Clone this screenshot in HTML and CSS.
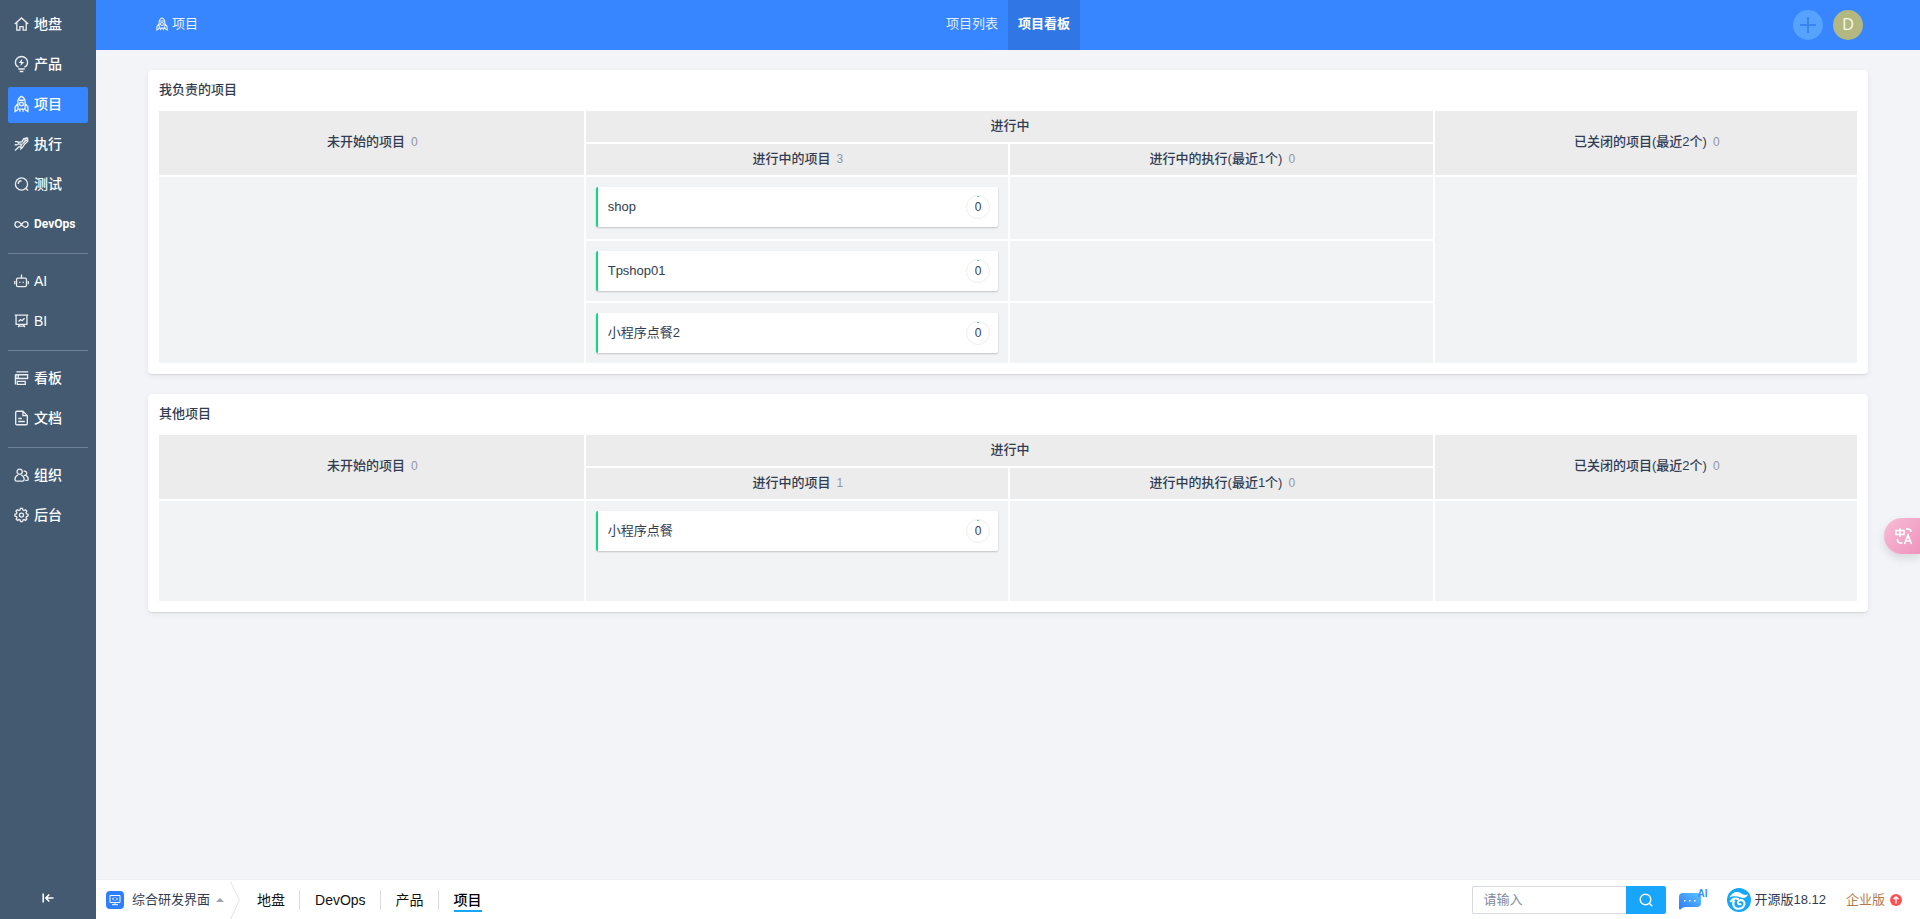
FILE: index.html
```html
<!DOCTYPE html>
<html lang="zh-CN">
<head>
<meta charset="utf-8">
<meta name="viewport" content="width=device-width, initial-scale=1">
<title>项目看板</title>
<link rel="stylesheet" href="styles.css">
</head>
<body>
<svg class="sprite" aria-hidden="true">
  <symbol id="i-rocket" viewBox="0 0 16 18"><path d="M4.200 14.500V6.200C4.200 3.800 6 1.800 8 .8c2 1 3.800 3 3.800 5.400v8.300zM4.200 8.500 1.200 12.200v4.800l3-2M11.800 8.500l3 3.700v4.800l-3-2M6.300 14.500v2.700M9.700 14.500v2.700M5.300 5h5.400"/><circle cx="8" cy="9" r="2"/></symbol>
</svg>
<div class="app">
  <aside class="sidebar">
    <nav class="menu">
      <a class="menu-item" href="#"><svg viewBox="0 0 16 16"><path d="M.8 8 8 1.500 15.200 8M3 6.500v8h3.300v-3.800h3.400v3.800H13v-8"/></svg>地盘</a>
      <a class="menu-item" href="#"><svg class="tall" viewBox="0 0 16 18"><path d="M5 12.500C2.700 11.300 1.500 9.500 1.500 7.300 1.500 3.700 4.400 1 8 1s6.500 2.700 6.500 6.300c0 2.200-1.200 4-3.500 5.200M4.500 14.300h7M6 17h4"/><path class="solid" d="M8.700 3.500 5 8h2.500l-.7 3.200L11 6.800H8.300z"/></svg>产品</a>
      <a class="menu-item active" href="#"><svg class="tall"><use href="#i-rocket"/></svg>项目</a>
      <a class="menu-item" href="#"><svg viewBox="0 0 16 16"><path d="M10.500 2.200 14.500 1.500l.2 3.500-3.200 3-2.700 4-2-.7 1.700-3.200L4.800 8 4.500 6.500l4-1zM1 5.500h3.500M.8 8.800h3M1 15l5-4.500M6.500 14l2-2M9.500 7.500l3.500-4"/><circle cx="12.800" cy="3" r="1.300"/></svg>执行</a>
      <a class="menu-item" href="#"><svg viewBox="0 0 16 16"><circle cx="8" cy="8" r="6.500"/><path d="m12.600 12.600 2.400 2.400M4.500 8A3.500 3.500 0 0 1 8 4.500"/></svg>测试</a>
      <a class="menu-item" href="#"><svg viewBox="0 0 16 16"><path d="M8 8.500C6.600 6.500 5.500 5.500 4 5.500a3 3 0 0 0 0 6c1.500 0 2.600-1 4-3s2.500-3 4-3a3 3 0 0 1 0 6c-1.500 0-2.600-1-4-3z"/></svg><span class="narrow">DevOps</span></a>
    </nav>
    <nav class="menu">
      <a class="menu-item" href="#"><svg viewBox="0 0 16 16"><rect x="2.700" y="5" width="10.600" height="9" rx="1.500"/><path d="M8 5V1.500M.8 8v3.500M15.200 8v3.500M5.500 9.500h1.300M9.200 9.500h1.300"/><circle class="solid" cx="8" cy="1.500" r=".6"/></svg>AI</a>
      <a class="menu-item" href="#"><svg viewBox="0 0 16 16"><path d="M.8 1.800h14.400M2.200 2v9.500h11.600V2M4.500 14.500l1.500-3M11.500 14.500l-1.500-3M5 13.500h6M4.800 8.500 7 6.500l1.700 1.200 2.600-2.700"/></svg>BI</a>
    </nav>
    <nav class="menu">
      <a class="menu-item" href="#"><svg viewBox="0 0 16 16"><path d="M2.500 1.500h12.700M2 4.500h12.500v4H2zM1.500 4.500V15M3.500 11.500H12v3.200H3.500zM4.500 5v3"/></svg>看板</a>
      <a class="menu-item" href="#"><svg viewBox="0 0 16 16"><path d="M9.500.8H3A1.200 1.200 0 0 0 1.800 2v12A1.200 1.200 0 0 0 3 15.200h10a1.200 1.200 0 0 0 1.200-1.200V5.500zM9.500 1v4.500H14M4.500 8.500h3.800M4.500 11.700h7"/></svg>文档</a>
    </nav>
    <nav class="menu">
      <a class="menu-item" href="#"><svg viewBox="0 0 16 16"><circle cx="6" cy="4.500" r="2.800"/><path d="M4.300 8C2.500 8.700 1 10.500 1 12.700 1 14 1.800 14.500 3 14.500h6c1.200 0 1.900-.6 1.900-1.800 0-2.200-1.400-4-3.200-4.700M10.500 8.300a2.300 2.300 0 1 0-.3-4.200M12.500 8.500c1.500.6 2.700 2 2.700 4 0 .8-.5 1.300-1.400 1.300H12"/></svg>组织</a>
      <a class="menu-item" href="#"><svg viewBox="0 0 16 16"><path d="m6.800 1-.5 1.800-1.200.5-1.700-.9-1.300 1.500.9 1.600-.4 1.200L1 7.200v1.900l1.700.5.500 1.200-.9 1.700 1.400 1.300 1.600-.9 1.200.5.500 1.600h2l.5-1.600 1.200-.5 1.600.9 1.400-1.300-.9-1.700.5-1.200 1.700-.5V7.200l-1.700-.5-.5-1.200.9-1.600-1.400-1.500-1.600.9-1.200-.5L9 1z"/><circle cx="8" cy="8.100" r="2.200"/></svg>后台</a>
    </nav>
    <button class="collapse" type="button" aria-label="收起菜单"><svg viewBox="0 0 12 12"><path d="M1.200 1.500v9M11.500 6H4.200M7.300 2.500 3.800 6l3.500 3.500"/></svg></button>
  </aside>

  <header class="topbar">
    <a class="crumb" href="#"><svg><use href="#i-rocket"/></svg>项目</a>
    <nav class="tabs">
      <a class="tab" href="#">项目列表</a>
      <a class="tab active" href="#">项目看板</a>
    </nav>
    <div class="actions">
      <button class="round add" type="button" aria-label="新建"><svg viewBox="0 0 18 18"><path d="M9 1v16M1 9h16"/></svg></button>
      <button class="round avatar" type="button">D</button>
    </div>
  </header>

  <main class="content">
    <section class="panel">
      <h2 class="panel-title">我负责的项目</h2>
      <table class="kanban">
        <colgroup><col class="lead"><col><col><col></colgroup>
        <thead>
          <tr><th rowspan="2">未开始的项目<span class="count">0</span></th><th colspan="2">进行中</th><th rowspan="2">已关闭的项目(最近2个)<span class="count">0</span></th></tr>
          <tr><th>进行中的项目<span class="count">3</span></th><th>进行中的执行(最近1个)<span class="count">0</span></th></tr>
        </thead>
        <tbody>
          <tr class="first"><td rowspan="3"></td><td><div class="card"><a href="#">shop</a><span class="ring">0</span></div></td><td></td><td rowspan="3"></td></tr>
          <tr><td><div class="card"><a href="#">Tpshop01</a><span class="ring">0</span></div></td><td></td></tr>
          <tr><td><div class="card"><a href="#">小程序点餐2</a><span class="ring">0</span></div></td><td></td></tr>
        </tbody>
      </table>
    </section>
    <section class="panel">
      <h2 class="panel-title">其他项目</h2>
      <table class="kanban roomy">
        <colgroup><col class="lead"><col><col><col></colgroup>
        <thead>
          <tr><th rowspan="2">未开始的项目<span class="count">0</span></th><th colspan="2">进行中</th><th rowspan="2">已关闭的项目(最近2个)<span class="count">0</span></th></tr>
          <tr><th>进行中的项目<span class="count">1</span></th><th>进行中的执行(最近1个)<span class="count">0</span></th></tr>
        </thead>
        <tbody>
          <tr><td></td><td><div class="card"><a href="#">小程序点餐</a><span class="ring">0</span></div></td><td></td><td></td></tr>
        </tbody>
      </table>
    </section>
  </main>

  <footer class="bottombar">
    <button class="vision" type="button">
      <svg class="vision-icon" viewBox="0 0 18 18"><rect width="18" height="18" rx="4" fill="#2e7fff"/><path d="M4 4.500h10v7H4zM9 11.500v2M6 13.700h6M8 6.500 6.500 8 8 9.500M10 6.500 11.500 8 10 9.500" fill="none" stroke="#fff"/></svg>
      <span>综合研发界面</span><i class="caret"></i>
    </button>
    <svg class="chevron" viewBox="0 0 10 40"><path d="M.5 2 9.500 21 .5 40"/></svg>
    <nav class="recent">
      <a href="#">地盘</a><a href="#">DevOps</a><a href="#">产品</a><a class="active" href="#"><span>项目</span></a>
    </nav>
    <form class="search">
      <input type="text" aria-label="搜索" placeholder="请输入">
      <button type="button" aria-label="搜索"><svg viewBox="0 0 14 14"><circle cx="6.500" cy="6.500" r="5.300"/><path d="m10.500 10.500 2.800 2.800"/></svg></button>
    </form>
    <button class="ai" type="button"><svg viewBox="0 0 22 18"><defs><linearGradient id="ai-fill" x1="0" y1="1" x2="1" y2="0"><stop offset="0" stop-color="#2b78f8"/><stop offset="1" stop-color="#5cc4ff"/></linearGradient></defs><path fill="url(#ai-fill)" d="M4 1h14q4 0 4 4v6q0 4-4 4H6q-3 0-4.500 2.500Q0 18 0 16V5q0-4 4-4z"/><path fill="#fff" d="M5 8h1.500v1.500H5zM10 8h1.500v1.500H10zM15 8h1.500v1.500H15z"/></svg><span>AI</span></button>
    <a class="version" href="#"><svg viewBox="0 0 24 24"><circle cx="12" cy="12" r="12" fill="#16a8f8"/><path fill="#fff" d="M2.500 9.500C4.500 4.500 10 2.500 14 5.300c2.300 1.600 4.500 2 7 1.200-1.200 3-4 4-7 3C10 8 6 7.500 2.500 9.500z"/><path d="M3.500 14c2-3.500 5.500-4 8.500-2.500M7.500 12.500C4.500 16 7 20.800 11.500 20.800c5 0 7.500-4.800 5-7.600-2.300-2.300-6-.6-5.500 1.800.4 1.700 2.500 1.700 3 .5" fill="none" stroke="#fff" stroke-width="2"/></svg>开源版18.12</a>
    <a class="upgrade" href="#">企业版<svg viewBox="0 0 12 12"><circle cx="6" cy="6" r="6" fill="#ff5151"/><path d="M6 9.500V3M3.500 5.300 6 2.800l2.500 2.500" fill="none" stroke="#fff" stroke-width="1.400"/></svg></a>
  </footer>
</div>
<button class="translate" type="button" aria-label="翻译"><svg viewBox="0 0 18 18"><path d="M1 3.500h8v4H1zM5 1v9M11 2h2q3 0 3 3M2.500 12v1q0 3 3 3h2M9.500 17 13 8l3.500 9M10.800 14h4.500"/></svg></button>
</body>
</html>
```
FILE: styles.css
```css
* { box-sizing: border-box; }
body {
  margin: 0;
  font: 13px/20px "Liberation Sans", "Noto Sans CJK SC", sans-serif;
  color: #313c52;
  background: #f2f4f7;
}
a { color: inherit; text-decoration: none; }
button { padding: 0; border: 0; background: none; font: inherit; color: inherit; cursor: pointer; }
svg { flex: none; fill: none; stroke: currentColor; }
.sprite { position: absolute; width: 0; height: 0; }

.app {
  display: grid;
  grid-template: 50px 1fr 40px / 96px minmax(0, 1fr);
  grid-template-areas: "side top" "side main" "side foot";
  min-height: 100vh;
}

/* Sidebar */
.sidebar {
  grid-area: side;
  display: flex;
  flex-direction: column;
  padding: 7px 8px;
  background: #435a71;
  color: #fff;
}
.menu { display: grid; grid-template-columns: minmax(0, 1fr); gap: 4px; }
.menu + .menu { margin-top: 10px; padding-top: 10px; border-top: 1px solid #6f8297; }
.menu-item {
  display: flex;
  align-items: center;
  gap: 5px;
  height: 36px;
  padding: 0 6px 2px;
  border-radius: 2px;
  font-size: 14px;
  font-weight: 500;
}
.menu-item.active { background: #3785ff; }
.menu-item svg { width: 15px; height: 16px; stroke-width: 1.4; opacity: .9; }
.menu-item svg.tall { height: 18px; }
.solid { fill: currentColor; stroke: none; }
.narrow { font-size: 12px; font-family: Roboto, sans-serif; font-weight: 700; }
.collapse { margin-top: auto; height: 24px; }
.collapse svg { width: 12px; height: 12px; stroke-width: 1.6; }

/* Top bar */
.topbar {
  grid-area: top;
  display: grid;
  grid-template-columns: 1fr auto 1fr;
  align-items: center;
  padding: 0 57px;
  background: #3785ff;
  color: #fff;
}
.crumb { display: flex; align-items: center; gap: 4px; padding: 0 0 2px 3px; opacity: .9; }
.crumb svg { width: 12px; height: 14px; stroke-width: 1.4; }
.tabs { display: flex; align-self: stretch; }
.tab { padding: 0 10px; line-height: 48px; color: #e3eeff; }
.tab.active { background: #3077e5; color: #fff; font-weight: 700; }
.actions { display: flex; justify-content: flex-end; gap: 10px; }
.round { width: 30px; height: 30px; border-radius: 50%; }
.add { display: grid; place-items: center; background: #55a3ff; color: #3785f0; }
.add svg { width: 18px; height: 18px; stroke-width: 2; }
.avatar { background: #b2b87f; color: #f3f4ea; font-size: 16px; }

/* Board */
.content { grid-area: main; display: flex; flex-direction: column; gap: 20px; padding: 20px 52px; }
.panel {
  padding: 9px;
  border-radius: 4px;
  background: #fff;
  box-shadow: 0 1px 1px rgba(0, 0, 0, .08), 0 2px 6px rgba(0, 0, 0, .06);
}
.panel-title { margin: 0 2px 8px; font-size: 13px; font-weight: 500; line-height: 22px; }
.kanban { width: 100%; table-layout: fixed; border-spacing: 2px; }
.kanban .lead { width: 25.1%; }
.kanban th { height: 31px; padding: 0 0 2px 2px; background: #ececec; font-weight: 500; }
.kanban td { height: 60px; padding: 10px; background: #f1f3f5; vertical-align: top; }
.kanban .first td { height: 62px; }
.kanban.roomy td { height: 100px; }
.count { margin-left: 6px; color: #9297a6; font-size: 12px; font-weight: 400; }
.card {
  display: flex;
  align-items: center;
  justify-content: space-between;
  height: 40px;
  padding: 0 8px 0 10px;
  border-left: 2px solid #0bd986;
  border-radius: 2px;
  background: #fff;
  box-shadow: 0 1px 2px rgba(0, 0, 0, .2);
}
.ring {
  width: 24px;
  height: 24px;
  border: 1px solid #eeeeee;
  border-radius: 50%;
  background: linear-gradient(#66c39a, #66c39a) top / 2px 1px no-repeat;
  font-size: 12px;
  line-height: 22px;
  text-align: center;
}

/* Bottom bar */
.bottombar {
  grid-area: foot;
  display: flex;
  align-items: center;
  padding: 0 18px 0 10px;
  border-top: 1px solid #eceef1;
  background: #fff;
}
.vision { display: flex; align-items: center; gap: 8px; }
.vision-icon { width: 18px; height: 18px; stroke: none; }
.caret { margin-left: -2px; border: 4px solid transparent; border-top: 0; border-bottom-color: #9ea3b0; }
.chevron { width: 10px; height: 39px; margin-left: 6px; color: #e0e2e6; }
.recent { display: flex; margin-left: 2px; color: #111; font-size: 14px; }
.recent a { padding: 0 14px 0 15px; }
.recent a + a { border-left: 1px solid #d9dbdf; }
.recent .active { font-weight: 500; color: #000; }
.recent .active span { display: block; box-shadow: 0 2px #16a8f8; }
.search { display: flex; height: 28px; margin-left: auto; }
.search input {
  width: 154px;
  padding: 0 10px;
  border: 1px solid #d8dbde;
  border-right: 0;
  border-radius: 2px 0 0 2px;
  font: inherit;
}
.search input::placeholder { color: #838a9d; }
.search button { display: grid; place-items: center; width: 40px; border-radius: 0 2px 2px 0; background: #18a6fd; color: #fff; }
.search svg { width: 14px; height: 14px; stroke-width: 1.4; }
.ai { display: flex; align-items: flex-start; margin-left: 13px; color: #3a8dff; font-size: 10px; font-weight: 700; line-height: 10px; }
.ai svg { width: 22px; height: 18px; margin: 3px -4px 0 0; stroke: none; }
.version { display: flex; align-items: center; gap: 3px; margin-left: 20px; }
.version svg { width: 24px; height: 24px; stroke: none; }
.upgrade { display: flex; align-items: center; gap: 5px; margin-left: 20px; color: #b8794a; }
.upgrade svg { width: 12px; height: 12px; stroke: none; }

/* Floating translate button */
.translate {
  position: fixed;
  top: 518px;
  right: 0;
  display: flex;
  align-items: center;
  width: 36px;
  height: 36px;
  padding-left: 11px;
  border-radius: 18px 0 0 18px;
  background: linear-gradient(135deg, #f7bdd6, #f093bd);
  box-shadow: 0 4px 10px rgba(0, 0, 0, .12);
  color: #fff;
}
.translate svg { width: 18px; height: 18px; stroke-width: 1.6; }
```
